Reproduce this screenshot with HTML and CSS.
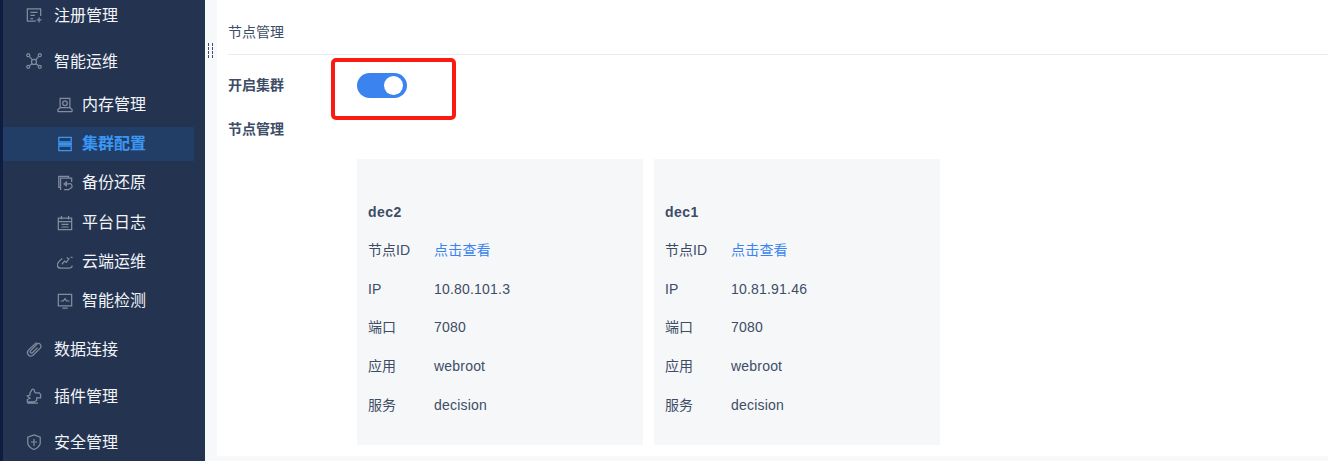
FILE: index.html

```html
<!DOCTYPE html>
<html lang="en">
<head>
	<meta charset="UTF-8">
	<title>节点管理</title>
	<link rel="stylesheet" href="styles.css">
</head>
<body>
	<aside class="sidebar">
		<ul class="menu">
			<li class="item item-first">
				<svg class="icon" viewBox="0 0 18 18"><path d="M16.500 10V2h-15v14H11M5 6h8M5 9.500h5M5 13h3M12 14.500h5.500M14.700 11.500v6"/></svg>
				<span>注册管理</span>
			</li>
			<li class="item item-open">
				<svg class="icon" viewBox="0 0 18 18"><circle cx="2.500" cy="2.500" r="1.700"/><circle cx="15.500" cy="2.500" r="1.700"/><circle cx="2.500" cy="15.500" r="1.700"/><circle cx="15.500" cy="15.500" r="1.700"/><circle cx="9" cy="10" r="2.800"/><path d="M4 4l3 3.500M14 4l-3 3.500M4 14l3-2M14 14l-3-2"/></svg>
				<span>智能运维</span>
			</li>
			<li class="sub">
				<svg class="icon" viewBox="0 0 18 18"><path d="M3.500 1.500h11V12h-11zM1 16.500h16M1 16.500V14l2.500-2M17 16.500V14l-2.500-2"/><circle cx="9" cy="7" r="2.600"/></svg>
				<span>内存管理</span>
			</li>
			<li class="sub sub-active">
				<svg class="icon" viewBox="0 0 18 18"><path d="M2 1.500h14v5H2zM2 11.500h14v5H2z"/><path class="icon-fill" d="M2 8h14v2H2z"/></svg>
				<span>集群配置</span>
			</li>
			<li class="sub">
				<svg class="icon" viewBox="0 0 18 18"><path d="M13 3V1.500H2V14h2M4 17V3.500h12.500V8M8 10l2.500-2v4zM10 10h3.500a2 2 0 0 1 1.500 5l-2 1.500H8"/></svg>
				<span>备份还原</span>
			</li>
			<li class="sub">
				<svg class="icon" viewBox="0 0 18 18"><path d="M1.500 3.500h15v13h-15zM1.500 7.500h15M5 1v4M13 1v4M5 10.500h8M5 13.500h8"/></svg>
				<span>平台日志</span>
			</li>
			<li class="sub">
				<svg class="icon" viewBox="0 0 18 18"><path d="M6 5C3 7-.5 11 .500 13.500 1 15.500 3 16 5 16h8c2 0 4-1 4-3M5.500 11.500L8.500 8l2 1.500 3.500-5M11 4l1.500 1M15.500 3.500l2 .500"/></svg>
				<span>云端运维</span>
			</li>
			<li class="sub">
				<svg class="icon" viewBox="0 0 18 18"><path d="M1.500 1.500h15v13h-15zM6 17h6M4 9h3l2-2.500L11 9h3"/></svg>
				<span>智能检测</span>
			</li>
			<li class="item item-data">
				<svg class="icon" viewBox="0 0 18 18"><path d="M12 1.500L3 10c-2 2-1.500 4.500 0 6s4 1 5.500-.5L16 8c2-2.500 0-6-3-5L5 11c-1 1.500 1 3.500 2.500 2L13 7.500"/></svg>
				<span>数据连接</span>
			</li>
			<li class="item item-plugin">
				<svg class="icon" viewBox="0 0 18 18"><path d="M7 1.500c1.500-.5 3 .5 2.500 2.500l1 1.500H15l1.500 2v3.500H15L12 11v3l-3 1.500H1.500V13l3-1.500-3-2.500 3-1V5.500zM1.500 17h12"/></svg>
				<span>插件管理</span>
			</li>
			<li class="item item-safe">
				<svg class="icon" viewBox="0 0 18 18"><path d="M9 1l7 2.500V10c0 3.500-4 6-7 7.500C6 16 2 13.500 2 10V3.500zM9 5.500v8M5.500 9h7"/></svg>
				<span>安全管理</span>
			</li>
		</ul>
	</aside>
	<main class="content">
		<section class="panel">
			<h2 class="panel-title">节点管理</h2>
			<div class="field">
				<label class="field-name">开启集群</label>
				<div class="switch-wrap">
					<div class="switch"><span class="switch-dot"></span></div>
					<div class="mark"></div>
				</div>
			</div>
			<div class="field field-nodes">
				<label class="field-name">节点管理</label>
			</div>
			<div class="nodes">
				<div class="node">
					<h3 class="node-name">dec2</h3>
					<dl class="node-row"><dt>节点ID</dt><dd class="link">点击查看</dd></dl>
					<dl class="node-row"><dt>IP</dt><dd>10.80.101.3</dd></dl>
					<dl class="node-row"><dt>端口</dt><dd>7080</dd></dl>
					<dl class="node-row"><dt>应用</dt><dd>webroot</dd></dl>
					<dl class="node-row"><dt>服务</dt><dd>decision</dd></dl>
				</div>
				<div class="node">
					<h3 class="node-name">dec1</h3>
					<dl class="node-row"><dt>节点ID</dt><dd class="link">点击查看</dd></dl>
					<dl class="node-row"><dt>IP</dt><dd>10.81.91.46</dd></dl>
					<dl class="node-row"><dt>端口</dt><dd>7080</dd></dl>
					<dl class="node-row"><dt>应用</dt><dd>webroot</dd></dl>
					<dl class="node-row"><dt>服务</dt><dd>decision</dd></dl>
				</div>
			</div>
		</section>
		<div class="grip"></div>
	</main>
</body>
</html>
```

FILE: styles.css

```css
*{
	box-sizing:border-box;
	margin:0;
	padding:0;
}
html,body{
	height:461px;
	overflow:hidden;
}
body{
	display:flex;
	font-family:"Liberation Sans","Noto Sans CJK SC",sans-serif;
	font-size:14px;
	color:#3d4d66;
	background:#f7f8fa;
}
.sidebar{
	width:205px;
	flex-shrink:0;
	height:461px;
	overflow:hidden;
	background:#233350;
	border-left:3px solid #0f1c3f;
	color:#fff;
}
.menu{
	list-style:none;
}
.item,.sub{
	display:flex;
	align-items:center;
	font-size:16px;
	line-height:22px;
	color:#f2f4f8;
}
.item{
	padding-left:23px;
	height:34px;
}
.item span{
	margin-top:2px;
}
.item .icon{
	margin-right:12px;
}
.item-first{
	height:30px;
}
.item-open{
	margin-top:14px;
}
.item-data{
	margin-top:14px;
}
.item-plugin{
	margin-top:13px;
}
.item-safe{
	margin-top:12px;
}
.sub{
	height:34px;
	margin-top:5.2px;
	padding-left:54px;
	width:191px;
}
.item-open + .sub{
	margin-top:10px;
}
.sub .icon{
	margin-right:9px;
}
.icon{
	width:16px;
	height:16px;
	flex-shrink:0;
	fill:none;
	stroke:#838d9e;
	stroke-width:1.4;
}
.sub-active{
	background:#223e66;
	color:#3b97f5;
	font-weight:700;
}
.sub-active .icon{
	stroke:#3b97f5;
}
.icon-fill{
	fill:#3b97f5;
}
.content{
	flex:1;
	position:relative;
	padding-left:12px;
	min-width:0;
}
.panel{
	background:#fff;
	height:456px;
	padding:0 0 0 11px;
	overflow:hidden;
}
.panel-title{
	height:55px;
	padding-top:21px;
	font-size:14px;
	line-height:22px;
	font-weight:400;
	border-bottom:1px solid #e8eaed;
}
.field{
	display:flex;
	align-items:center;
	height:62px;
}
.field-name{
	width:129px;
	font-weight:700;
	line-height:20px;
	margin-top:-2px;
}
.switch-wrap{
	position:relative;
	width:50px;
	height:25px;
	margin-top:-2px;
}
.switch{
	width:50px;
	height:25px;
	border-radius:13px;
	background:#3b84f0;
	position:relative;
}
.switch-dot{
	position:absolute;
	top:3px;
	right:4px;
	width:19px;
	height:19px;
	border-radius:50%;
	background:#fff;
}
.mark{
	position:absolute;
	left:-26px;
	top:-15px;
	width:125px;
	height:62px;
	border:4px solid #fb1a12;
	border-radius:5px;
}
.field-nodes{
	height:24px;
}
.field-nodes .field-name{
	margin-top:0;
}
.nodes{
	display:flex;
	gap:11px;
	margin-top:18px;
	padding-left:129px;
}
.node{
	width:286px;
	height:286px;
	padding:43px 11px 0;
	background:#f6f7f9;
}
.node-name{
	font-size:14px;
	line-height:20px;
	font-weight:700;
	letter-spacing:.5px;
	margin-bottom:9px;
}
.node-row{
	display:flex;
	align-items:center;
	height:38.6px;
	line-height:20px;
}
.node-row dt{
	width:66px;
}
.node-row dd{
	letter-spacing:.2px;
}
.link{
	color:#3b84f0;
}
.grip{
	position:absolute;
	left:3px;
	top:43px;
	width:5px;
	height:15px;
	border-left:1px dashed #3d4d66;
	border-right:1px dashed #3d4d66;
}
```
